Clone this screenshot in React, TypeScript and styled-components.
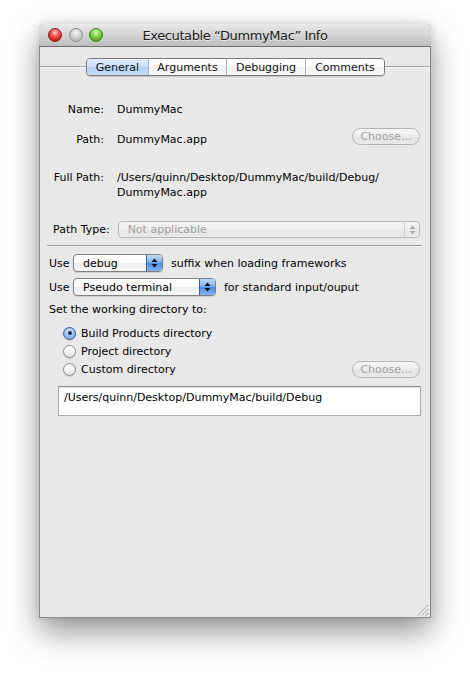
import React from "react";
import styled, { createGlobalStyle, css } from "styled-components";

const Global = createGlobalStyle`
  html, body { margin: 0; padding: 0; background: #ffffff; }
  body { font-family: "DejaVu Sans", "Liberation Sans", sans-serif; font-size: 11px; color: #000; }
  * { box-sizing: border-box; }
`;

const Page = styled.div`
  padding: 24px 0 0 39px;
  width: 470px;
  height: 673px;
  overflow: hidden;
`;

const Window = styled.div`
  width: 392px;
  height: 594px;
  background: #e8e8e8;
  border: 1px solid #8c8c8c;
  border-top: none;
  border-radius: 5px 5px 0 0;
  box-shadow: 0 14px 32px rgba(0, 0, 0, 0.42), 0 0 8px rgba(0, 0, 0, 0.12);
  display: flex;
  flex-direction: column;
`;

const TitleBar = styled.div`
  height: 23px;
  flex: 0 0 23px;
  border-radius: 5px 5px 0 0;
  background: linear-gradient(to bottom, #e9e9e9 0%, #d6d6d6 45%, #bdbdbd 100%);
  border-bottom: 1px solid #6e6e6e;
  margin: 0 -1px;
  display: flex;
  align-items: center;
  padding: 0 9px;
`;

const Lights = styled.div`
  display: flex;
  gap: 6.5px;
  width: 94px;
`;

const Light = styled.span<{ $kind: "close" | "min" | "zoom" }>`
  width: 14px;
  height: 14px;
  border-radius: 50%;
  ${(p) =>
    p.$kind === "close"
      ? css`
          background: radial-gradient(circle at 50% 30%, #ffd0cc 0%, #f25b55 35%, #c2140f 80%, #8f0c09 100%);
          border: 1px solid #8c1a16;
        `
      : p.$kind === "min"
      ? css`
          background: radial-gradient(circle at 50% 30%, #f6f6f6 0%, #d3d3d3 40%, #b0b0b0 85%, #9c9c9c 100%);
          border: 1px solid #8f8f8f;
        `
      : css`
          background: radial-gradient(circle at 50% 30%, #e4ffcc 0%, #8ed853 35%, #4ea21c 80%, #2f7410 100%);
          border: 1px solid #3b7d1b;
        `}
`;

const Title = styled.div`
  font-size: 13px;
  color: #1a1a1a;
  text-shadow: 0 1px 0 rgba(255, 255, 255, 0.6);
  flex: 1;
  text-align: center;
  margin-left: -94px;
  letter-spacing: -0.4px;
`;

const TabRow = styled.div`
  margin-top: 11px;
  height: 18px;
  display: flex;
  justify-content: center;
  background: linear-gradient(
    to bottom,
    transparent 8px,
    #a3a3a3 8px,
    #a3a3a3 9px,
    #f7f7f7 9px,
    #f7f7f7 10px,
    transparent 10px
  );
`;

const Segmented = styled.div`
  display: flex;
  border: 1px solid #7a7a7a;
  border-radius: 4px;
  overflow: hidden;
  box-shadow: 0 1px 1px rgba(0, 0, 0, 0.15);
  margin-left: 1px;
`;

const Tab = styled.div<{ $w: number; $active?: boolean }>`
  width: ${(p) => p.$w}px;
  height: 16px;
  display: flex;
  align-items: center;
  justify-content: center;
  font-size: 11px;
  color: #111;
  border-left: 1px solid #b0b0b0;
  &:first-child { border-left: none; }
  background: ${(p) =>
    p.$active
      ? "linear-gradient(to bottom, #e3eefb 0%, #c9dff7 50%, #b3d1f4 51%, #c6def8 100%)"
      : "linear-gradient(to bottom, #ffffff 0%, #fbfbfb 50%, #f1f1f1 51%, #f6f6f6 100%)"};
`;

const InfoGrid = styled.div`
  display: grid;
  grid-template-columns: 64px 1fr;
  column-gap: 13px;
  line-height: 15px;
`;

const Label = styled.div`
  text-align: right;
  white-space: nowrap;
`;

const Value = styled.div`
  display: flex;
  justify-content: space-between;
  align-items: flex-start;
  padding-right: 10px;
`;

const ValueText = styled.span`
  padding-top: 4px;
`;

const Cell = styled.div<{ $top: number; $pad?: number }>`
  margin-top: ${(p) => p.$top}px;
  padding-top: ${(p) => p.$pad ?? 0}px;
`;

const ChooseButton = styled.div`
  width: 68px;
  height: 17px;
  border: 1px solid #b4b4b4;
  border-radius: 9px;
  background: linear-gradient(to bottom, #f6f6f6 0%, #ececec 50%, #e2e2e2 51%, #eaeaea 100%);
  color: #a4a4a4;
  font-size: 11px;
  display: flex;
  align-items: center;
  justify-content: center;
  line-height: 1;
`;

const PathTypeRow = styled.div`
  margin-top: 21px;
  display: flex;
  align-items: center;
  padding-left: 13px;
  padding-right: 10px;
  gap: 8px;
`;

const Popup = styled.div<{ $w?: number; $disabled?: boolean }>`
  ${(p) => (p.$w ? `width: ${p.$w}px;` : "flex: 1;")}
  height: ${(p) => (p.$disabled ? 17 : 18)}px;
  border: 1px solid ${(p) => (p.$disabled ? "#b8b8b8" : "#7f7f7f")};
  border-radius: 4px;
  display: flex;
  align-items: stretch;
  overflow: hidden;
  background: ${(p) =>
    p.$disabled
      ? "linear-gradient(to bottom, #f3f3f3 0%, #ededed 50%, #e6e6e6 51%, #ebebeb 100%)"
      : "linear-gradient(to bottom, #ffffff 0%, #fafafa 50%, #eeeeee 51%, #f6f6f6 100%)"};
  color: ${(p) => (p.$disabled ? "#a0a0a0" : "#000")};
  box-shadow: ${(p) => (p.$disabled ? "none" : "0 1px 1px rgba(0,0,0,0.12)")};
`;

const PopupText = styled.div`
  flex: 1;
  padding-left: 9px;
  display: flex;
  align-items: center;
  font-size: 11px;
  white-space: nowrap;
`;

const PopupArrows = styled.div<{ $disabled?: boolean }>`
  width: 16px;
  display: flex;
  align-items: center;
  justify-content: center;
  ${(p) =>
    p.$disabled
      ? css`
          border-left: 1px solid #d0d0d0;
          width: 15px;
        `
      : css`
          border-left: 1px solid #3d5f9a;
          background: linear-gradient(to bottom, #c5dcf8 0%, #82b1ee 45%, #4f8ee6 52%, #7fb5f2 100%);
        `}
`;

const Separator = styled.div`
  margin: 7px 8px 0 7px;
  height: 2px;
  border-top: 1px solid #9c9c9c;
  border-bottom: 1px solid #f4f4f4;
`;

const UseRow = styled.div<{ $top: number }>`
  margin-top: ${(p) => p.$top}px;
  display: flex;
  align-items: center;
  padding-left: 9px;
`;

const UseLabel = styled.span`
  width: 24px;
`;

const UseTail = styled.span`
  margin-left: 8px;
  white-space: nowrap;
`;

const PlainLine = styled.div`
  margin-top: 6px;
  padding-left: 9px;
  line-height: 15px;
`;

const RadioList = styled.div`
  margin-top: 7px;
  display: flex;
  flex-direction: column;
`;

const RadioRow = styled.div`
  height: 18px;
  display: flex;
  align-items: center;
  padding-left: 23px;
  padding-right: 10px;
`;

const RadioCircle = styled.span<{ $on?: boolean }>`
  width: 13px;
  height: 13px;
  border-radius: 50%;
  flex: 0 0 13px;
  display: flex;
  align-items: center;
  justify-content: center;
  border: 1px solid ${(p) => (p.$on ? "#3f5f95" : "#8a8a8a")};
  background: ${(p) =>
    p.$on
      ? "radial-gradient(circle at 50% 35%, #e4f0fd 0%, #9cc3f1 45%, #5e97e4 100%)"
      : "linear-gradient(to bottom, #ffffff 0%, #f4f4f4 50%, #e4e4e4 100%)"};
  box-shadow: 0 1px 1px rgba(0, 0, 0, 0.12);
`;

const RadioDot = styled.span`
  width: 4px;
  height: 4px;
  border-radius: 50%;
  background: #1d2a44;
`;

const RadioLabel = styled.span`
  margin-left: 5px;
  flex: 1;
  white-space: nowrap;
`;

const PathField = styled.div`
  margin: 8px 9px 0 18px;
  height: 30px;
  background: #ffffff;
  border: 1px solid #a9a9a9;
  border-top-color: #8e8e8e;
  box-shadow: inset 0 1px 1px rgba(0, 0, 0, 0.12);
  padding: 3px 5px;
  line-height: 15px;
  white-space: nowrap;
`;

const Footer = styled.div`
  margin-top: auto;
  display: flex;
  justify-content: flex-end;
  padding: 0 1px 1px 0;
`;

const Arrows = ({ color }: { color: string }) => (
  <svg width="7" height="10" viewBox="0 0 7 10">
    <path d="M3.5 0.5 L6.5 4 L0.5 4 Z" fill={color} />
    <path d="M3.5 9.5 L6.5 6 L0.5 6 Z" fill={color} />
  </svg>
);

const Grip = () => (
  <svg width="12" height="12" viewBox="0 0 12 12">
    <g stroke="#8a8a8a" strokeWidth="1">
      <line x1="1" y1="11.5" x2="11.5" y2="1" />
      <line x1="5" y1="11.5" x2="11.5" y2="5" />
      <line x1="9" y1="11.5" x2="11.5" y2="9" />
    </g>
    <g stroke="#ffffff" strokeWidth="1" opacity="0.8">
      <line x1="2" y1="11.5" x2="11.5" y2="2" />
      <line x1="6" y1="11.5" x2="11.5" y2="6" />
    </g>
  </svg>
);

export default function App() {
  return (
    <>
      <Global />
      <Page>
        <Window>
          <TitleBar>
            <Lights>
              <Light $kind="close" />
              <Light $kind="min" />
              <Light $kind="zoom" />
            </Lights>
            <Title>Executable “DummyMac” Info</Title>
          </TitleBar>

          <TabRow>
            <Segmented>
              <Tab $w={61} $active>General</Tab>
              <Tab $w={78}>Arguments</Tab>
              <Tab $w={79}>Debugging</Tab>
              <Tab $w={79}>Comments</Tab>
            </Segmented>
          </TabRow>

          <InfoGrid>
            <Cell $top={26}>
              <Label>Name:</Label>
            </Cell>
            <Cell $top={26}>DummyMac</Cell>

            <Cell $top={11} $pad={4}>
              <Label>Path:</Label>
            </Cell>
            <Cell $top={11}>
              <Value>
                <ValueText>DummyMac.app</ValueText>
                <ChooseButton>Choose...</ChooseButton>
              </Value>
            </Cell>

            <Cell $top={23}>
              <Label>Full Path:</Label>
            </Cell>
            <Cell $top={23}>
              /Users/quinn/Desktop/DummyMac/build/Debug/
              <br />
              DummyMac.app
            </Cell>
          </InfoGrid>

          <PathTypeRow>
            <span>Path Type:</span>
            <Popup $disabled>
              <PopupText>Not applicable</PopupText>
              <PopupArrows $disabled>
                <Arrows color="#a8a8a8" />
              </PopupArrows>
            </Popup>
          </PathTypeRow>

          <Separator />

          <UseRow $top={7}>
            <UseLabel>Use</UseLabel>
            <Popup $w={90}>
              <PopupText>debug</PopupText>
              <PopupArrows>
                <Arrows color="#111" />
              </PopupArrows>
            </Popup>
            <UseTail>suffix when loading frameworks</UseTail>
          </UseRow>

          <UseRow $top={6}>
            <UseLabel>Use</UseLabel>
            <Popup $w={143}>
              <PopupText>Pseudo terminal</PopupText>
              <PopupArrows>
                <Arrows color="#111" />
              </PopupArrows>
            </Popup>
            <UseTail>for standard input/ouput</UseTail>
          </UseRow>

          <PlainLine>Set the working directory to:</PlainLine>

          <RadioList>
            <RadioRow>
              <RadioCircle $on>
                <RadioDot />
              </RadioCircle>
              <RadioLabel>Build Products directory</RadioLabel>
            </RadioRow>
            <RadioRow>
              <RadioCircle />
              <RadioLabel>Project directory</RadioLabel>
            </RadioRow>
            <RadioRow>
              <RadioCircle />
              <RadioLabel>Custom directory</RadioLabel>
              <ChooseButton>Choose...</ChooseButton>
            </RadioRow>
          </RadioList>

          <PathField>/Users/quinn/Desktop/DummyMac/build/Debug</PathField>

          <Footer>
            <Grip />
          </Footer>
        </Window>
      </Page>
    </>
  );
}
